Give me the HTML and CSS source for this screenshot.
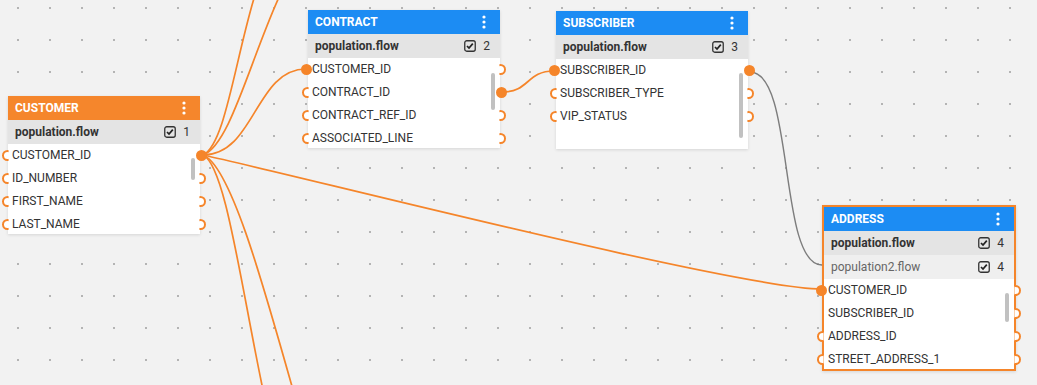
FILE: index.html
```html
<!DOCTYPE html>
<html lang="en">

<head>
    <meta charset="UTF-8">
    <meta name="viewport" content="width=device-width, initial-scale=1.0">
    <title>Flow Mapper</title>
    <link rel="stylesheet" href="styles.css">
</head>

<body>
    <div class="canvas">
        <svg class="links" width="1037" height="385" viewBox="0 0 1037 385">
            <path class="link" d="M203,155 C255,155 255,69 306,69" />
            <path class="link" d="M203,155 C300,176 740,289 822,289" />
            <path class="link" d="M203,155 C225,145 235,60 255,-5" />
            <path class="link" d="M203,155 C230,145 250,60 280,-5" />
            <path class="link" d="M203,155 C225,165 240,280 263,390" />
            <path class="link" d="M203,155 C230,165 262,280 293,390" />
            <path class="link" d="M502,92 C530,92 526,71 554,71" />
            <path class="link grey" d="M750,72 C795,72 778,265 822,265" />
        </svg>

        <!-- customer -->
        <div class="node node-customer">
            <div class="node-head orange">
                <span>CUSTOMER</span>
                <svg class="kebab" width="4" height="14" viewBox="0 0 4 14"><circle cx="2" cy="2" r="1.6"/><circle cx="2" cy="7" r="1.6"/><circle cx="2" cy="12" r="1.6"/></svg>
            </div>
            <div class="flow">
                <span>population.flow</span>
                <span class="flow-count">
                    <svg class="check" width="12" height="12" viewBox="0 0 12 12"><rect x="0.75" y="0.75" width="10.5" height="10.5" rx="2"/><path d="M3,6 L5,8 L8.8,3.6"/></svg>
                    1
                </span>
            </div>
            <div class="fields">
                <div class="field"><span class="port in"></span>CUSTOMER_ID<span class="port out on"></span></div>
                <div class="field"><span class="port in"></span>ID_NUMBER<span class="port out"></span></div>
                <div class="field"><span class="port in"></span>FIRST_NAME<span class="port out"></span></div>
                <div class="field"><span class="port in"></span>LAST_NAME<span class="port out"></span></div>
                <div class="scroll" style="top: 14px; height: 22px;"></div>
            </div>
        </div>

        <!-- contract -->
        <div class="node node-contract">
            <div class="node-head blue">
                <span>CONTRACT</span>
                <svg class="kebab" width="4" height="14" viewBox="0 0 4 14"><circle cx="2" cy="2" r="1.6"/><circle cx="2" cy="7" r="1.6"/><circle cx="2" cy="12" r="1.6"/></svg>
            </div>
            <div class="flow">
                <span>population.flow</span>
                <span class="flow-count">
                    <svg class="check" width="12" height="12" viewBox="0 0 12 12"><rect x="0.75" y="0.75" width="10.5" height="10.5" rx="2"/><path d="M3,6 L5,8 L8.8,3.6"/></svg>
                    2
                </span>
            </div>
            <div class="fields">
                <div class="field"><span class="port in on"></span>CUSTOMER_ID<span class="port out"></span></div>
                <div class="field"><span class="port in"></span>CONTRACT_ID<span class="port out on"></span></div>
                <div class="field"><span class="port in"></span>CONTRACT_REF_ID<span class="port out"></span></div>
                <div class="field"><span class="port in"></span>ASSOCIATED_LINE<span class="port out"></span></div>
                <div class="scroll" style="top: 15px; height: 37px;"></div>
            </div>
        </div>

        <!-- subscriber -->
        <div class="node node-subscriber">
            <div class="node-head blue">
                <span>SUBSCRIBER</span>
                <svg class="kebab" width="4" height="14" viewBox="0 0 4 14"><circle cx="2" cy="2" r="1.6"/><circle cx="2" cy="7" r="1.6"/><circle cx="2" cy="12" r="1.6"/></svg>
            </div>
            <div class="flow">
                <span>population.flow</span>
                <span class="flow-count">
                    <svg class="check" width="12" height="12" viewBox="0 0 12 12"><rect x="0.75" y="0.75" width="10.5" height="10.5" rx="2"/><path d="M3,6 L5,8 L8.8,3.6"/></svg>
                    3
                </span>
            </div>
            <div class="fields">
                <div class="field"><span class="port in on"></span>SUBSCRIBER_ID<span class="port out on"></span></div>
                <div class="field"><span class="port in"></span>SUBSCRIBER_TYPE<span class="port out"></span></div>
                <div class="field"><span class="port in"></span>VIP_STATUS<span class="port out"></span></div>
                <div class="scroll" style="top: 14px; height: 65px;"></div>
            </div>
        </div>

        <!-- address (selected) -->
        <div class="node node-address selected">
            <div class="node-head blue">
                <span>ADDRESS</span>
                <svg class="kebab" width="4" height="14" viewBox="0 0 4 14"><circle cx="2" cy="2" r="1.6"/><circle cx="2" cy="7" r="1.6"/><circle cx="2" cy="12" r="1.6"/></svg>
            </div>
            <div class="flow">
                <span>population.flow</span>
                <span class="flow-count">
                    <svg class="check" width="12" height="12" viewBox="0 0 12 12"><rect x="0.75" y="0.75" width="10.5" height="10.5" rx="2"/><path d="M3,6 L5,8 L8.8,3.6"/></svg>
                    4
                </span>
            </div>
            <div class="flow flow-alt">
                <span>population2.flow</span>
                <span class="flow-count">
                    <svg class="check" width="12" height="12" viewBox="0 0 12 12"><rect x="0.75" y="0.75" width="10.5" height="10.5" rx="2"/><path d="M3,6 L5,8 L8.8,3.6"/></svg>
                    4
                </span>
            </div>
            <div class="fields">
                <div class="field"><span class="port in on"></span>CUSTOMER_ID<span class="port out"></span></div>
                <div class="field">SUBSCRIBER_ID<span class="port out"></span></div>
                <div class="field"><span class="port in"></span>ADDRESS_ID<span class="port out"></span></div>
                <div class="field"><span class="port in"></span>STREET_ADDRESS_1<span class="port out"></span></div>
                <div class="scroll" style="top: 14px; height: 29px;"></div>
            </div>
        </div>
    </div>
</body>

</html>
```

FILE: styles.css
```css
body {
    margin: 0;
    font-family: Roboto, "Liberation Sans", Arial, sans-serif;
    background-color: #f2f2f2;
    overflow: hidden;
}

.canvas {
    position: relative;
    width: 1037px;
    height: 385px;
    overflow: hidden;
    background-color: #f2f2f2;
    background-image: radial-gradient(circle, #b4b4b4 0.9px, transparent 1.2px);
    background-size: 32px 32px;
    background-position: 2px -8px;
}

.links {
    position: absolute;
    left: 0;
    top: 0;
}

.link {
    fill: none;
    stroke: #f5852a;
    stroke-width: 1.7;
}

.link.grey {
    stroke: #7d7d7d;
    stroke-width: 1.4;
}

.node {
    position: absolute;
    width: 192px;
    background-color: #fff;
    box-shadow: 0 1px 3px rgba(0, 0, 0, 0.12);
}

.node-customer {
    left: 8px;
    top: 96px;
}

.node-contract {
    left: 308px;
    top: 10px;
}

.node-subscriber {
    left: 556px;
    top: 11px;
}

.node-address {
    left: 822px;
    top: 205px;
}

.node.selected {
    width: 194px;
    box-sizing: border-box;
    border: 2px solid #f5852a;
}

.node-head {
    height: 24px;
    display: flex;
    align-items: center;
    justify-content: space-between;
    padding: 0 14px 0 7px;
    color: #fff;
    font-size: 12px;
    font-weight: bold;
}

.node-head.orange {
    background-color: #f5862c;
}

.node-head.blue {
    background-color: #1c8cf3;
}

.kebab {
    fill: #fff;
}

.flow {
    height: 24px;
    display: flex;
    align-items: center;
    justify-content: space-between;
    padding: 0 10px 0 7px;
    background-color: #e4e4e4;
    color: #333;
    font-size: 12px;
    font-weight: bold;
}

.flow-alt {
    background-color: #efefef;
    color: #666;
    font-weight: normal;
}

.flow-count {
    display: flex;
    align-items: center;
    gap: 7px;
    color: #333;
    font-weight: normal;
}

.check rect {
    fill: none;
    stroke: #333;
    stroke-width: 1.3;
}

.check path {
    fill: none;
    stroke: #222;
    stroke-width: 1.7;
}

.fields {
    position: relative;
    height: 90px;
}

.field {
    position: relative;
    height: 23px;
    line-height: 23px;
    padding-left: 4px;
    color: #333;
    font-size: 12px;
}

.port {
    position: absolute;
    top: 6px;
    width: 7px;
    height: 7px;
    border: 2px solid #f5852a;
    border-radius: 50%;
    background-color: #fff;
}

.port.in {
    left: -6px;
    clip-path: inset(-2px 40% -2px -2px);
}

.port.out {
    right: -6px;
    clip-path: inset(-2px -2px -2px 40%);
}

.selected .port.in {
    left: -7px;
}

.selected .port.out {
    right: -7px;
}

.port.on {
    background-color: #f5852a;
    clip-path: none;
}

.port.in.on {
    left: -7px;
}

.port.out.on {
    right: -7px;
}

.selected .port.in.on {
    left: -8px;
}

.scroll {
    position: absolute;
    right: 5px;
    width: 4px;
    border-radius: 2px;
    background-color: #c1c1c1;
}
```
